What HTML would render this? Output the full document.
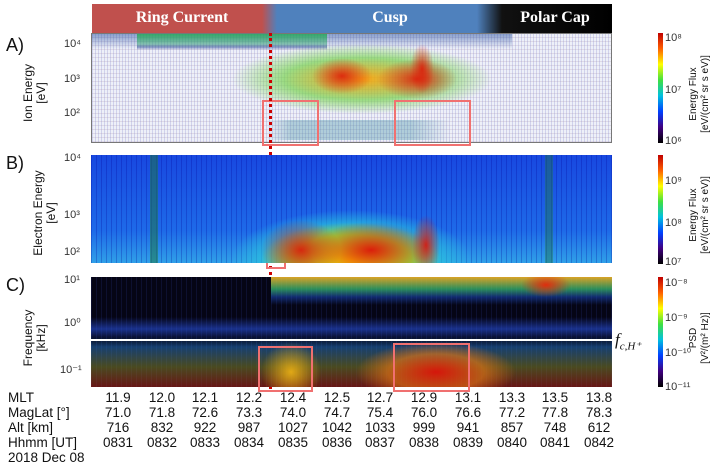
<!DOCTYPE html>
<html><head><meta charset="utf-8"><style>
body{margin:0;width:718px;height:467px;background:#fff;position:relative;overflow:hidden;font-family:"Liberation Sans",sans-serif;color:#111}
.a{position:absolute}
.lab{font-size:18px}
.tick{font-size:11px;color:#333}
.rot{transform:rotate(-90deg);transform-origin:center;text-align:center;font-size:12px;line-height:13px;white-space:nowrap}
.row{position:absolute;left:0;font-size:13.5px}
.row span{position:absolute;width:50px;text-align:center;margin-left:-25px}
.box{position:absolute;border:2px solid #f07070}
.red{position:absolute;border-left:3px dotted #c00}
</style></head><body>
<!-- header -->
<div class="a" style="left:92px;top:4px;width:520px;height:29px;background:linear-gradient(90deg,#c0504d 0,#c0504d 170px,#4f81bd 185px,#4f81bd 385px,#111 410px,#000 100%)"></div>
<div class="a" style="left:92px;top:9px;width:180px;text-align:center;color:#fff;font:bold 16px 'Liberation Serif',serif">Ring Current</div>
<div class="a" style="left:290px;top:9px;width:200px;text-align:center;color:#fff;font:bold 16px 'Liberation Serif',serif">Cusp</div>
<div class="a" style="left:500px;top:9px;width:110px;text-align:center;color:#fff;font:bold 16px 'Liberation Serif',serif">Polar Cap</div>

<!-- Panel A -->
<div class="a" style="left:91px;top:33px;width:521px;height:110px;border:1px solid #777;box-sizing:border-box;background:
radial-gradient(ellipse 40px 20px at 325px 45px,rgba(220,30,10,.9),transparent),
radial-gradient(ellipse 30px 18px at 250px 42px,rgba(220,30,10,.9),transparent),
radial-gradient(ellipse 12px 25px at 330px 35px,rgba(220,30,10,.9),transparent),
radial-gradient(ellipse 130px 35px at 270px 45px,rgba(250,160,0,.9),rgba(120,210,80,.7) 60%,transparent),
linear-gradient(180deg,rgba(40,170,90,.85) 0,rgba(60,170,120,.5) 10px,rgba(30,60,140,.5) 13px,transparent 16px) 45px 0/190px 100% no-repeat,
linear-gradient(180deg,rgba(40,80,160,.5) 0,transparent 15px) 0 0/420px 100% no-repeat,
repeating-linear-gradient(90deg,rgba(120,120,200,.25) 0 1px,transparent 1px 3px),
repeating-linear-gradient(0deg,rgba(160,130,160,.2) 0 1px,transparent 1px 4px),#eef0f8"></div>
<div class="a" style="left:91px;top:120px;width:521px;height:20px;background:linear-gradient(90deg,transparent 175px,rgba(60,140,160,.35) 200px,rgba(60,140,160,.35) 320px,transparent 360px)"></div>
<div class="box" style="left:262px;top:100px;width:53px;height:42px"></div>
<div class="box" style="left:394px;top:100px;width:73px;height:42px"></div>
<div class="red" style="left:269px;top:33px;height:356px"></div>

<!-- Panel B -->
<div class="a" style="left:91px;top:155px;width:521px;height:108px;background:
radial-gradient(ellipse 60px 28px at 280px 95px,rgba(220,20,10,.95),transparent),
radial-gradient(ellipse 40px 30px at 210px 95px,rgba(220,20,10,.9),transparent),
radial-gradient(ellipse 14px 30px at 335px 90px,rgba(220,20,10,.9),transparent),
radial-gradient(ellipse 120px 50px at 260px 105px,#ffe000,#90e040 50%,rgba(40,200,220,.6) 75%,transparent),
repeating-linear-gradient(90deg,rgba(0,0,150,.25) 0 1px,transparent 1px 5px),
linear-gradient(180deg,#1848e0,#1e6ae8 70%,#30a0e8)"></div>
<div class="a" style="left:150px;top:155px;width:8px;height:108px;background:rgba(30,120,60,.5)"></div>
<div class="a" style="left:545px;top:155px;width:8px;height:108px;background:rgba(30,120,60,.4)"></div>
<div class="box" style="left:266px;top:263px;width:16px;height:4px;border-top:none"></div>

<!-- Panel C -->
<div class="a" style="left:91px;top:277px;width:521px;height:110px;background:
radial-gradient(ellipse 25px 12px at 455px 8px,rgba(230,40,10,.95),transparent),
linear-gradient(180deg,rgba(240,180,40,.9),rgba(60,200,120,.7) 12px,rgba(30,80,200,.5) 20px,transparent 28px) 180px 0/350px 100% no-repeat,
radial-gradient(ellipse 80px 30px at 345px 95px,rgba(220,20,10,.95),rgba(240,120,20,.6) 60%,transparent),
radial-gradient(ellipse 30px 30px at 200px 95px,rgba(240,180,20,.9),transparent),
linear-gradient(180deg,transparent 60px,rgba(40,120,200,.5) 70px,rgba(120,120,40,.6) 90px,rgba(200,40,20,.5)),
linear-gradient(180deg,transparent 40px,rgba(40,80,220,.6) 52px,transparent 63px),
repeating-linear-gradient(90deg,rgba(60,80,200,.15) 0 1px,transparent 1px 5px),#050515"></div>
<div class="a" style="left:91px;top:339px;width:521px;height:2px;background:#fff"></div>
<div class="box" style="left:258px;top:346px;width:51px;height:42px"></div>
<div class="box" style="left:393px;top:343px;width:73px;height:45px"></div>

<!-- labels -->
<div class="a lab" style="left:6px;top:35px">A)</div>
<div class="a lab" style="left:6px;top:153px">B)</div>
<div class="a lab" style="left:6px;top:275px">C)</div>
<div class="a rot" style="left:20px;top:80px;width:90px;margin-left:-30px">Ion Energy<br>[eV]</div>
<div class="a rot" style="left:0px;top:200px;width:110px;margin-left:-10px">Electron Energy<br>[eV]</div>
<div class="a rot" style="left:10px;top:325px;width:90px;margin-left:-20px">Frequency<br>[kHz]</div>
<div class="a tick" style="left:64px;top:38px">10⁴</div>
<div class="a tick" style="left:64px;top:73px">10³</div>
<div class="a tick" style="left:64px;top:107px">10²</div>
<div class="a tick" style="left:64px;top:152px">10⁴</div>
<div class="a tick" style="left:64px;top:209px">10³</div>
<div class="a tick" style="left:64px;top:246px">10²</div>
<div class="a tick" style="left:64px;top:274px">10¹</div>
<div class="a tick" style="left:64px;top:316px">10⁰</div>
<div class="a tick" style="left:60px;top:363px">10⁻¹</div>
<div class="a" style="left:615px;top:330px;font:italic 17px 'Liberation Serif',serif">f<sub style="font-size:11px">c,H⁺</sub></div>

<!-- colorbars -->
<div class="a" style="left:658px;top:33px;width:5px;height:110px;background:linear-gradient(#c00000,#ff6000,#ffff00,#40e040,#00c0e0,#0040ff,#400080,#000)"></div>
<div class="a" style="left:658px;top:155px;width:5px;height:109px;background:linear-gradient(#c00000,#ff6000,#ffff00,#40e040,#00c0e0,#0040ff,#400080,#000)"></div>
<div class="a" style="left:658px;top:277px;width:5px;height:110px;background:linear-gradient(#c00000,#ff6000,#ffff00,#40e040,#00c0e0,#0040ff,#400080,#000)"></div>
<div class="a tick" style="left:665px;top:32px">10⁸</div>
<div class="a tick" style="left:665px;top:84px">10⁷</div>
<div class="a tick" style="left:665px;top:135px">10⁶</div>
<div class="a tick" style="left:665px;top:175px">10⁹</div>
<div class="a tick" style="left:665px;top:217px">10⁸</div>
<div class="a tick" style="left:665px;top:256px">10⁷</div>
<div class="a tick" style="left:665px;top:276px">10⁻⁸</div>
<div class="a tick" style="left:665px;top:311px">10⁻⁹</div>
<div class="a tick" style="left:665px;top:346px">10⁻¹⁰</div>
<div class="a tick" style="left:665px;top:380px">10⁻¹¹</div>
<div class="a rot" style="left:650px;top:82px;width:100px;font-size:10px;line-height:12px">Energy Flux<br>[eV/(cm² sr s eV)]</div>
<div class="a rot" style="left:650px;top:203px;width:100px;font-size:10px;line-height:12px">Energy Flux<br>[eV/(cm² sr s eV)]</div>
<div class="a rot" style="left:650px;top:326px;width:100px;font-size:10px;line-height:12px">PSD<br>[V²/(m² Hz)]</div>

<!-- bottom table -->
<div class="row" style="top:390px"><span style="margin:0;text-align:left;width:60px;left:8px">MLT</span>
<span style="left:118px">11.9</span><span style="left:162px">12.0</span><span style="left:205px">12.1</span><span style="left:249px">12.2</span><span style="left:293px">12.4</span><span style="left:337px">12.5</span><span style="left:380px">12.7</span><span style="left:424px">12.9</span><span style="left:468px">13.1</span><span style="left:512px">13.3</span><span style="left:555px">13.5</span><span style="left:599px">13.8</span></div>
<div class="row" style="top:405px"><span style="margin:0;text-align:left;width:80px;left:8px">MagLat [°]</span>
<span style="left:118px">71.0</span><span style="left:162px">71.8</span><span style="left:205px">72.6</span><span style="left:249px">73.3</span><span style="left:293px">74.0</span><span style="left:337px">74.7</span><span style="left:380px">75.4</span><span style="left:424px">76.0</span><span style="left:468px">76.6</span><span style="left:512px">77.2</span><span style="left:555px">77.8</span><span style="left:599px">78.3</span></div>
<div class="row" style="top:420px"><span style="margin:0;text-align:left;width:80px;left:8px">Alt [km]</span>
<span style="left:118px">716</span><span style="left:162px">832</span><span style="left:205px">922</span><span style="left:249px">987</span><span style="left:293px">1027</span><span style="left:337px">1042</span><span style="left:380px">1033</span><span style="left:424px">999</span><span style="left:468px">941</span><span style="left:512px">857</span><span style="left:555px">748</span><span style="left:599px">612</span></div>
<div class="row" style="top:435px"><span style="margin:0;text-align:left;width:90px;left:8px">Hhmm [UT]</span>
<span style="left:118px">0831</span><span style="left:162px">0832</span><span style="left:205px">0833</span><span style="left:249px">0834</span><span style="left:293px">0835</span><span style="left:337px">0836</span><span style="left:380px">0837</span><span style="left:424px">0838</span><span style="left:468px">0839</span><span style="left:512px">0840</span><span style="left:555px">0841</span><span style="left:599px">0842</span></div>
<div class="row" style="top:450px"><span style="margin:0;text-align:left;width:110px;left:8px">2018 Dec 08</span></div>
</body></html>
